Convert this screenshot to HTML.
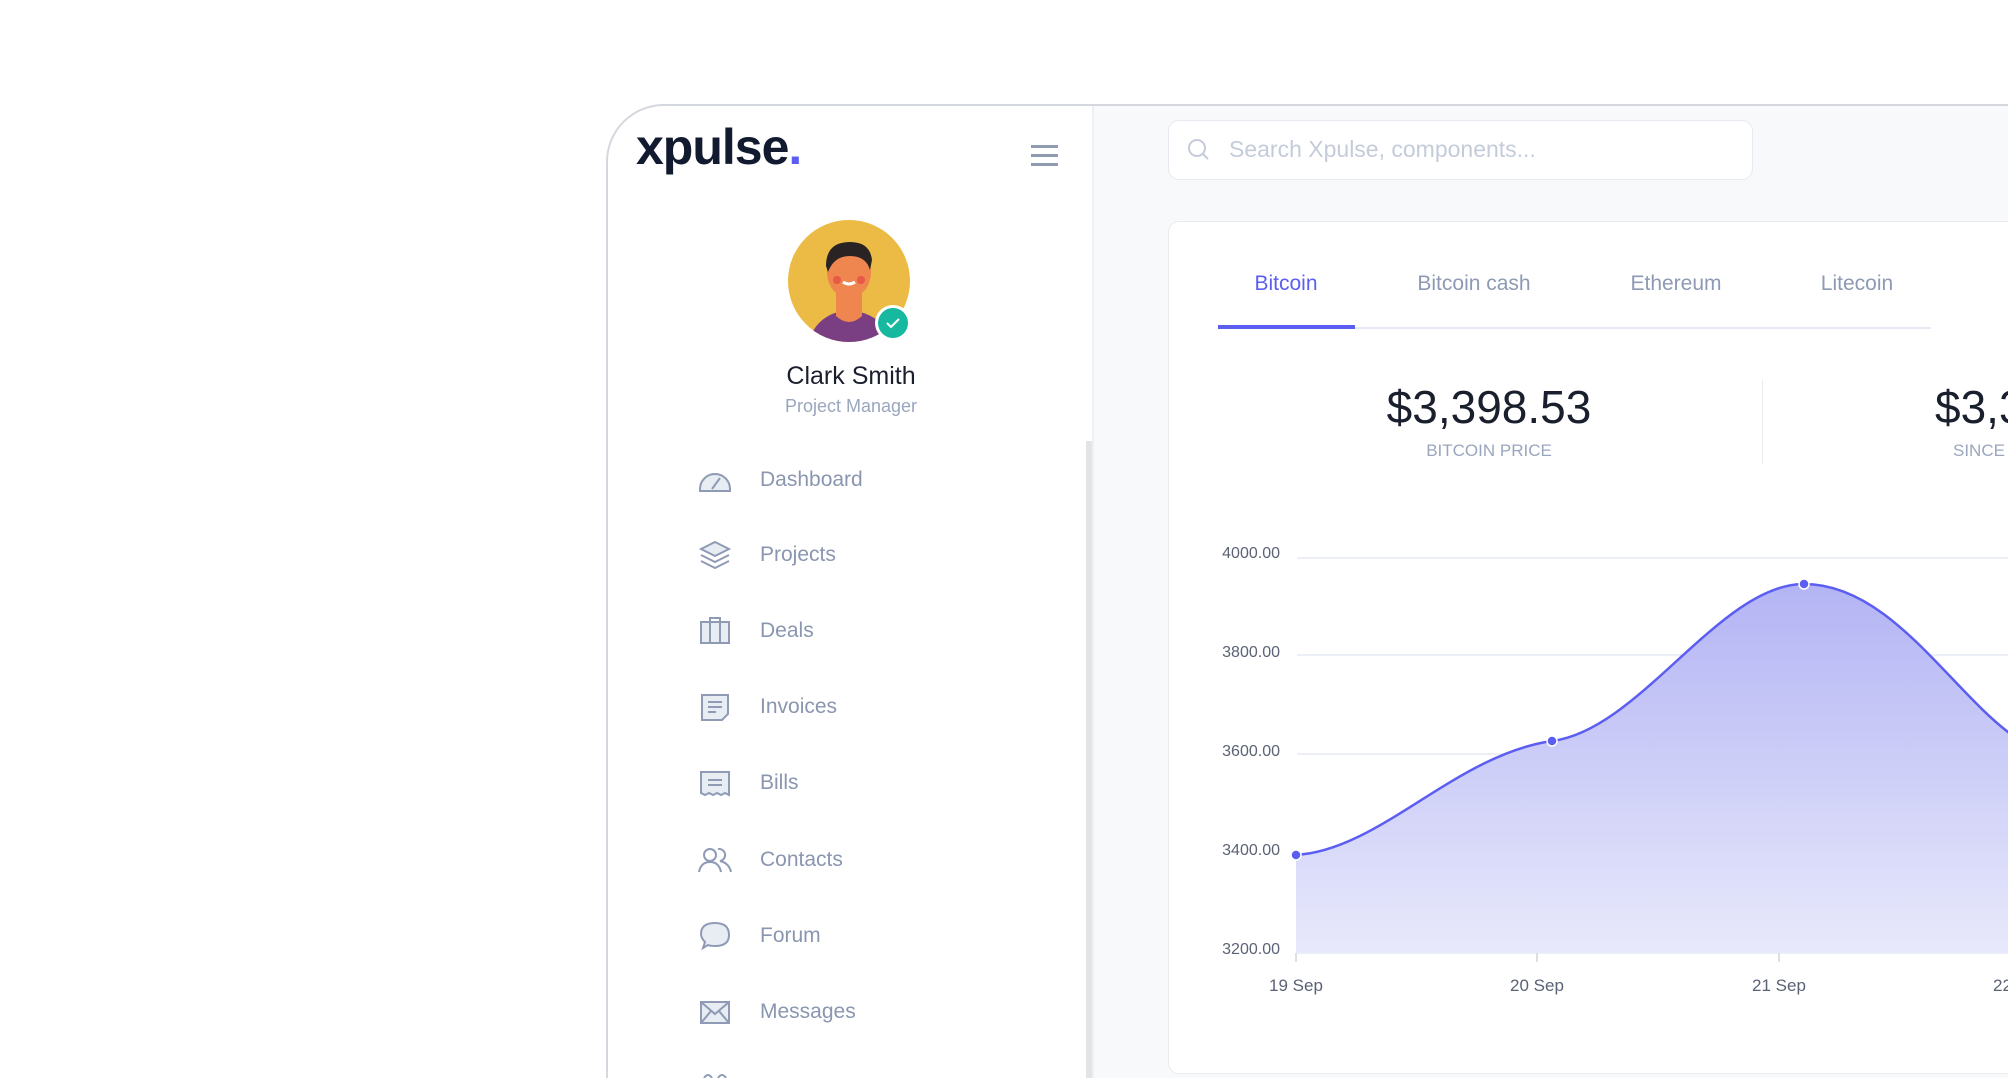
<!DOCTYPE html>
<html style="width:2008px;height:1078px;overflow:hidden"><head><meta charset="utf-8"><style>
*{margin:0;padding:0;box-sizing:border-box}
body{width:2008px;height:1078px;overflow:hidden;background:#fff;font-family:"Liberation Sans",sans-serif;position:relative}
.frame{position:absolute;left:606px;top:104px;width:1402px;height:974px;border:2px solid #d4d7dd;border-right:none;border-bottom:none;border-radius:58px 0 0 0;overflow:hidden;background:#f8f9fb}
.side{position:absolute;left:0;top:0;width:486px;height:100%;background:#fff;border-right:2px solid #eef0f3;overflow:hidden}
.abs{position:absolute}
.nav{position:absolute;left:152px;font-size:21px;color:#8a96b0}
.ic{position:absolute;left:90px;width:34px;height:34px}
.tab{position:absolute;top:272px;font-size:21px;color:#8e9ab3;transform:translateX(-50%);white-space:nowrap}
.yl{position:absolute;font-size:16px;color:#5b6275;right:728px;text-align:right}
.xl{position:absolute;top:976px;font-size:17px;color:#5b6275;transform:translateX(-50%);white-space:nowrap}
</style></head><body>
<div class="frame">
 <div class="side">
  <div class="abs" style="left:28px;top:12px;font-size:50px;font-weight:bold;color:#111a2e;letter-spacing:-1px">xpulse<span style="color:#5b5ef0">.</span></div>
  <div class="abs" style="left:423px;top:39px;width:27px;height:3px;background:#8f9bb0"></div>
  <div class="abs" style="left:423px;top:48px;width:27px;height:3px;background:#8f9bb0"></div>
  <div class="abs" style="left:423px;top:57px;width:27px;height:3px;background:#8f9bb0"></div>
  <svg class="abs" style="left:180px;top:114px" width="126" height="126" viewBox="0 0 126 126">
   <defs><clipPath id="c"><circle cx="61" cy="61" r="61"/></clipPath></defs>
   <circle cx="61" cy="61" r="61" fill="#ebbb45"/>
   <g clip-path="url(#c)">
    <path d="M20 122 Q28 98 50 92 L72 92 Q96 98 104 122Z" fill="#7a3f82"/>
    <path d="M48 70 L48 96 Q61 108 74 96 L74 70Z" fill="#ef8650"/>
    <ellipse cx="61" cy="52" rx="22" ry="26" fill="#ef8650"/>
    <path d="M38 46 Q38 22 62 22 Q82 22 84 40 L82 50 Q78 36 62 36 Q46 36 40 52Z" fill="#2a2323"/>
    <circle cx="49" cy="60" r="4" fill="#e75a46"/><circle cx="73" cy="60" r="4" fill="#e75a46"/>
    <path d="M55 62 Q61 66 67 62" stroke="#fff" stroke-width="3" fill="none"/>
   </g>
   <circle cx="105" cy="103" r="18" fill="#fff"/><circle cx="105" cy="103" r="15" fill="#17b8a0"/>
   <path d="M99 103 L103 107 L111 99" stroke="#fff" stroke-width="2" fill="none"/>
  </svg>
  <div class="abs" style="left:0;width:486px;top:256px;text-align:center;font-size:25px;color:#1a1f2e">Clark Smith</div>
  <div class="abs" style="left:0;width:486px;top:290px;text-align:center;font-size:18px;color:#9aa6be">Project Manager</div>
  <svg class="ic" style="top:357px" viewBox="0 0 34 34" fill="none" stroke="#8f9bb5" stroke-width="2"><path d="M2 26 A15 15 0 0 1 32 26 L32 28 L2 28Z" fill="#e8ecf3"/><path d="M14 26 L22 15"/></svg>
  <div class="nav" style="top:362px">Dashboard</div>
  <svg class="ic" style="top:432px" viewBox="0 0 34 34" fill="none" stroke="#8f9bb5" stroke-width="2"><path d="M3 11 L17 4 L31 11 L17 18Z" fill="#e8ecf3"/><path d="M3 17 L17 24 L31 17 M3 23 L17 30 L31 23"/></svg>
  <div class="nav" style="top:437px">Projects</div>
  <svg class="ic" style="top:508px" viewBox="0 0 34 34" fill="none" stroke="#8f9bb5" stroke-width="2"><rect x="3" y="8" width="28" height="21" fill="#e8ecf3"/><path d="M12 8 V4 H22 V8 M12 8 V29 M22 8 V29"/></svg>
  <div class="nav" style="top:513px">Deals</div>
  <svg class="ic" style="top:584px" viewBox="0 0 34 34" fill="none" stroke="#8f9bb5" stroke-width="2"><path d="M4 5 H30 V24 L24 30 H4Z" fill="#e8ecf3"/><path d="M10 12 H24 M10 17 H24 M10 22 H18"/></svg>
  <div class="nav" style="top:589px">Invoices</div>
  <svg class="ic" style="top:660px" viewBox="0 0 34 34" fill="none" stroke="#8f9bb5" stroke-width="2"><path d="M3 6 H31 V29 L27 27 L23 29 L19 27 L15 29 L11 27 L7 29 L3 27Z" fill="#e8ecf3"/><path d="M10 14 H24 M10 19 H24"/></svg>
  <div class="nav" style="top:665px">Bills</div>
  <svg class="ic" style="top:737px" viewBox="0 0 34 34" fill="none" stroke="#8f9bb5" stroke-width="2"><circle cx="12" cy="12" r="6"/><path d="M1 29 Q3 19 12 19 Q21 19 23 29"/><path d="M20 6 A6 6 0 1 1 22 18 Q31 20 33 29"/></svg>
  <div class="nav" style="top:742px">Contacts</div>
  <svg class="ic" style="top:813px" viewBox="0 0 34 34" fill="none" stroke="#8f9bb5" stroke-width="2"><path d="M5 29 L7 23 Q3 19 3 15 Q3 4 17 4 Q31 4 31 16 Q31 27 17 27 Q12 27 10 26Z" fill="#e8ecf3"/></svg>
  <div class="nav" style="top:818px">Forum</div>
  <svg class="ic" style="top:889px" viewBox="0 0 34 34" fill="none" stroke="#8f9bb5" stroke-width="2"><rect x="3" y="7" width="28" height="21" fill="#e8ecf3"/><path d="M3 7 L17 19 L31 7 M3 28 L13 16 M31 28 L21 16"/></svg>
  <div class="nav" style="top:894px">Messages</div>
  <svg class="ic" style="top:960px" viewBox="0 0 34 34" fill="none" stroke="#8f9bb5" stroke-width="2"><path d="M6 12 Q10 6 14 12 M20 12 Q24 6 28 12"/></svg>
  <div class="abs" style="left:478px;top:335px;width:8px;height:700px;background:#e4e4e6"></div>
 </div>
</div>
<div class="abs" style="left:1168px;top:120px;width:585px;height:60px;background:#fff;border:1px solid #e6e9ef;border-radius:11px"></div>
<svg class="abs" style="left:1186px;top:137px" width="26" height="26" viewBox="0 0 26 26" fill="none" stroke="#c4ccd9" stroke-width="2"><circle cx="11" cy="11" r="8"/><path d="M17 17 L22 22"/></svg>
<div class="abs" style="left:1229px;top:136px;font-size:23px;color:#c4ccd9">Search Xpulse, components...</div>
<div class="abs" style="left:1168px;top:221px;width:900px;height:853px;background:#fff;border:1px solid #e8ebf0;border-radius:11px"></div>
<div class="tab" style="left:1286px;color:#5b5ef0">Bitcoin</div>
<div class="tab" style="left:1474px">Bitcoin cash</div>
<div class="tab" style="left:1676px">Ethereum</div>
<div class="tab" style="left:1857px">Litecoin</div>
<div class="abs" style="left:1218px;top:327px;width:713px;height:2px;background:#e6ebf3"></div>
<div class="abs" style="left:1218px;top:325px;width:137px;height:4px;background:#5b5ef0"></div>
<div class="abs" style="left:1289px;width:400px;top:380px;text-align:center;font-size:46px;color:#1a1f2e">$3,398.53</div>
<div class="abs" style="left:1289px;width:400px;top:441px;text-align:center;font-size:17px;color:#9aa6be">BITCOIN PRICE</div>
<div class="abs" style="left:1762px;top:380px;width:1px;height:84px;background:#e8ebf0"></div>
<div class="abs" style="left:1935px;top:380px;font-size:46px;color:#1a1f2e;white-space:nowrap">$3,398</div>
<div class="abs" style="left:1953px;top:441px;font-size:17px;color:#9aa6be;white-space:nowrap">SINCE LAST</div>
<svg class="abs" style="left:0;top:0" width="2008" height="1078">
 <defs><linearGradient id="g" x1="0" y1="0" x2="0" y2="1"><stop offset="0" stop-color="#b3b4f4"/><stop offset="1" stop-color="#e8e9fb"/></linearGradient></defs>
 <g stroke="#e6ebf3" stroke-width="1.5"><path d="M1297 558 H2008 M1297 655 H2008 M1297 754 H2008 M1297 853 H2008 M1297 953 H2008"/></g>
 <path d="M1296 855 C1380 850 1455 755 1552 741 C1640 730 1720 584 1804 584 C1890 584 1950 690 2012 735 L2012 953 L1296 953Z" fill="url(#g)"/>
 <path d="M1296 855 C1380 850 1455 755 1552 741 C1640 730 1720 584 1804 584 C1890 584 1950 690 2012 735" fill="none" stroke="#5b5ef0" stroke-width="2.5"/>
 <g fill="#5b5ef0" stroke="#fff" stroke-width="1.5"><circle cx="1296" cy="855" r="5"/><circle cx="1552" cy="741" r="5"/><circle cx="1804" cy="584" r="5"/></g>
 <g stroke="#d0d5de" stroke-width="1.5"><path d="M1296 953 V962 M1537 953 V962 M1779 953 V962"/></g>
</svg>
<div class="yl" style="top:545px">4000.00</div>
<div class="yl" style="top:644px">3800.00</div>
<div class="yl" style="top:743px">3600.00</div>
<div class="yl" style="top:842px">3400.00</div>
<div class="yl" style="top:941px">3200.00</div>
<div class="xl" style="left:1296px">19 Sep</div>
<div class="xl" style="left:1537px">20 Sep</div>
<div class="xl" style="left:1779px">21 Sep</div>
<div class="xl" style="left:2020px">22 Sep</div>
</body></html>
